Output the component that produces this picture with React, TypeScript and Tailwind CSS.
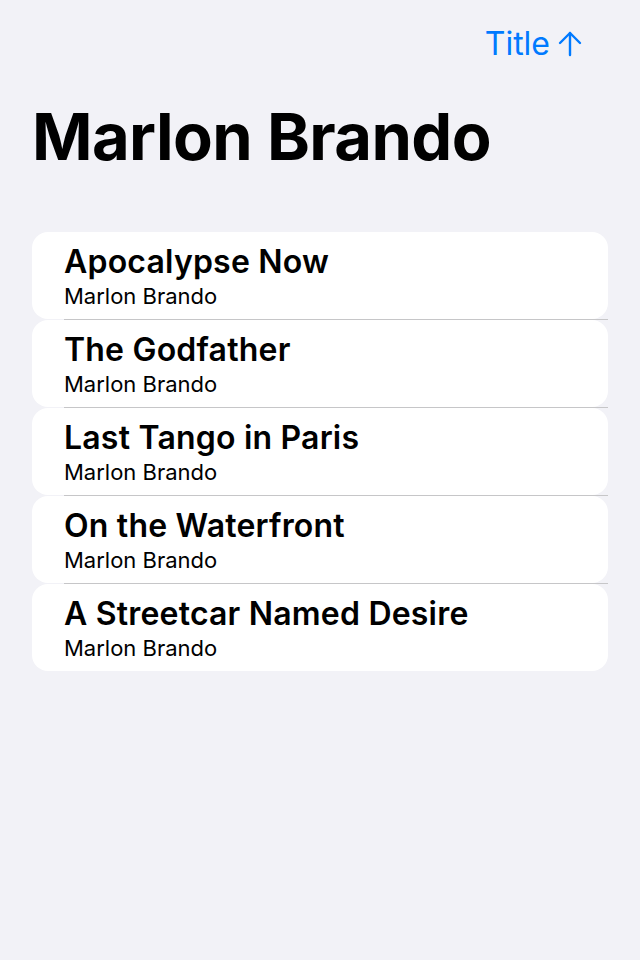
const movies = [
  "Apocalypse Now",
  "The Godfather",
  "Last Tango in Paris",
  "On the Waterfront",
  "A Streetcar Named Desire",
];

export default function App() {
  return (
    <div
      className="min-h-[960px] w-[640px] bg-[#f2f2f7] text-black"
      style={{ fontFamily: "Inter, 'Noto Sans', sans-serif" }}
    >
      <div className="flex h-[88px] items-center justify-end pr-[58px] pb-[1px]">
        <button className="flex items-center gap-[8px] text-[32px] leading-none text-[#007aff]">
          <span>Title</span>
          <svg width="24" height="26" viewBox="0 0 24 26" fill="none" stroke="currentColor" strokeWidth="2.4" strokeLinecap="round" strokeLinejoin="round">
            <path d="M12 24V2" />
            <path d="M2 12L12 2l10 10" />
          </svg>
        </button>
      </div>
      <h1 className="mt-[9px] px-[32px] text-[65px] font-bold leading-[80px] tracking-[-0.6px]">
        Marlon Brando
      </h1>
      <div className="mx-[32px] mt-[55px] flex flex-col">
        {movies.map((title, i) => (
          <div key={title}>
            <div className="flex h-[87px] flex-col rounded-[16px] bg-white pl-[32px] pt-[10px]">
              <div className="text-[32px] font-semibold leading-[40px] tracking-[0.2px]">{title}</div>
              <div className="text-[22px] leading-[28px]">Marlon Brando</div>
            </div>
            {i < movies.length - 1 && <div className="ml-[32px] h-px bg-[#c6c6c8]" />}
          </div>
        ))}
      </div>
    </div>
  );
}
